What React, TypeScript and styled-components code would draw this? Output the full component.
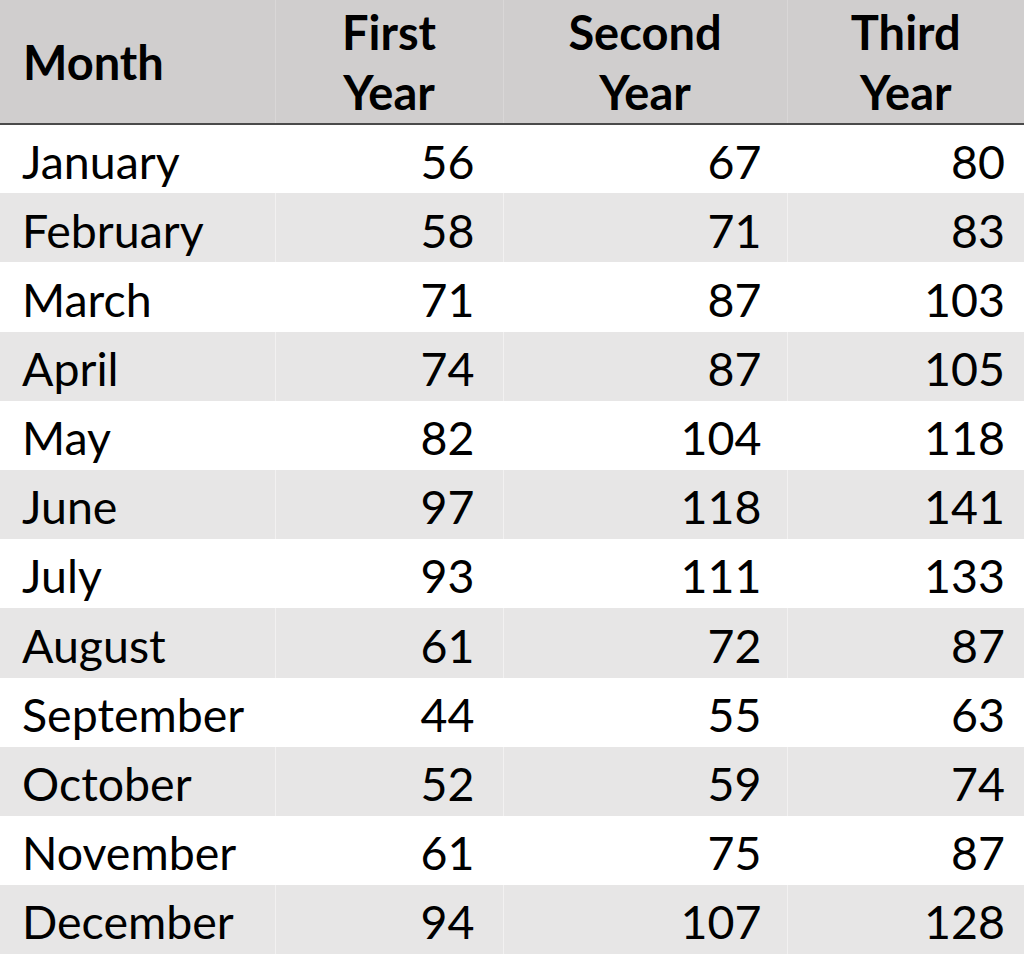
import React from "react";
import styled, { createGlobalStyle } from "styled-components";

const GlobalStyle = createGlobalStyle`
  html, body {
    margin: 0;
    padding: 0;
    background: #ffffff;
  }
`;

const Sheet = styled.table`
  width: 1024px;
  border-collapse: collapse;
  table-layout: fixed;
  font-family: "Lato", "Liberation Sans", sans-serif;
  color: #000;
`;

const HeadCell = styled.th<{ $left?: boolean }>`
  height: 123px;
  padding: 0;
  padding-left: ${({ $left }) => ($left ? "23px" : "0")};
  background: #d0cece;
  border-bottom: 2px solid #4a4a4a;
  border-left: 1px solid #d9d7d7;
  font-size: 47px;
  font-weight: 700;
  line-height: 60px;
  text-align: ${({ $left }) => ($left ? "left" : "center")};
  vertical-align: middle;

  &:first-child {
    border-left: none;
  }
`;

const Row = styled.tr<{ $shaded: boolean }>`
  height: 69.2px;
  background: ${({ $shaded }) => ($shaded ? "#e7e6e6" : "#ffffff")};
`;

const MonthCell = styled.td`
  padding: 4px 0 0 22px;
  font-size: 46.5px;
  line-height: 1;
  text-align: left;
  vertical-align: middle;
`;

const NumCell = styled.td<{ $pad: number }>`
  padding: 4px ${({ $pad }) => $pad}px 0 0;
  font-size: 46.5px;
  line-height: 1;
  text-align: right;
  vertical-align: middle;
  border-left: 1px solid rgba(255, 255, 255, 0.45);
`;

const data: [string, number, number, number][] = [
  ["January", 56, 67, 80],
  ["February", 58, 71, 83],
  ["March", 71, 87, 103],
  ["April", 74, 87, 105],
  ["May", 82, 104, 118],
  ["June", 97, 118, 141],
  ["July", 93, 111, 133],
  ["August", 61, 72, 87],
  ["September", 44, 55, 63],
  ["October", 52, 59, 74],
  ["November", 61, 75, 87],
  ["December", 94, 107, 128],
];

const App: React.FC = () => {
  return (
    <>
      <GlobalStyle />
      <Sheet>
        <colgroup>
          <col style={{ width: 275 }} />
          <col style={{ width: 228 }} />
          <col style={{ width: 284 }} />
          <col style={{ width: 237 }} />
        </colgroup>
        <thead>
          <tr>
            <HeadCell $left>Month</HeadCell>
            <HeadCell>
              First
              <br />
              Year
            </HeadCell>
            <HeadCell>
              Second
              <br />
              Year
            </HeadCell>
            <HeadCell>
              Third
              <br />
              Year
            </HeadCell>
          </tr>
        </thead>
        <tbody>
          {data.map(([month, first, second, third], i) => (
            <Row key={month} $shaded={i % 2 === 1}>
              <MonthCell>{month}</MonthCell>
              <NumCell $pad={28}>{first}</NumCell>
              <NumCell $pad={25}>{second}</NumCell>
              <NumCell $pad={19}>{third}</NumCell>
            </Row>
          ))}
        </tbody>
      </Sheet>
    </>
  );
};

export default App;
